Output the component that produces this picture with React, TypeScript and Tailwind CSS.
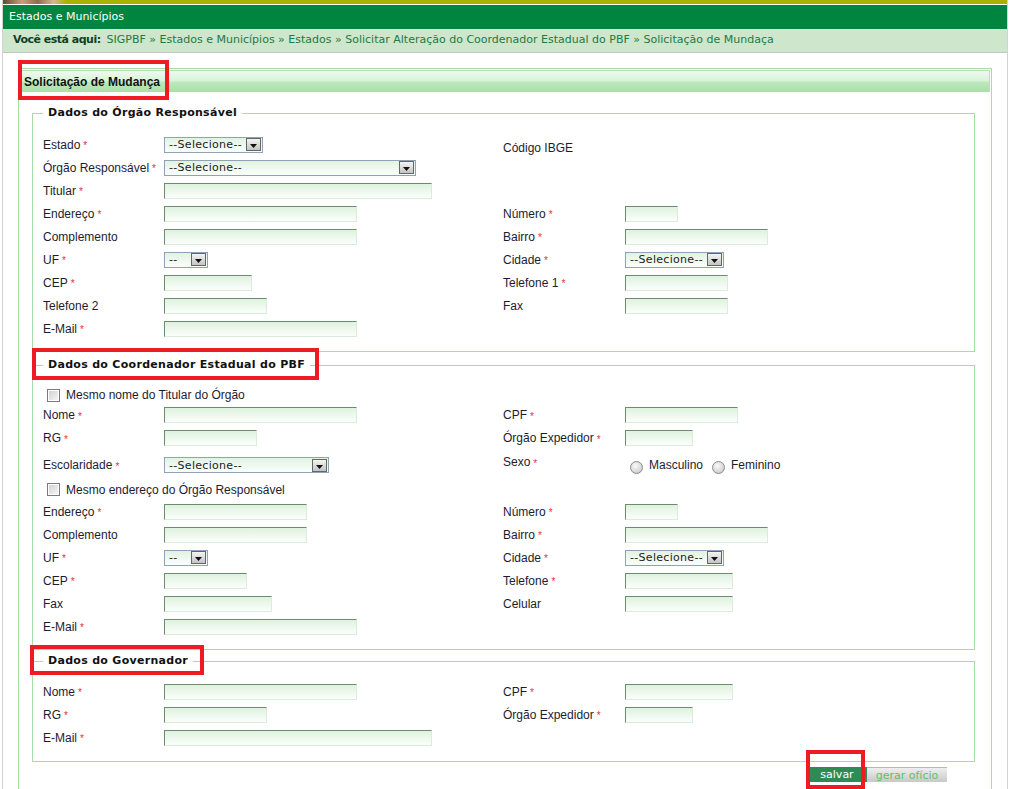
import type { ReactNode } from "react";

const arial = "font-['Liberation_Sans',Arial,sans-serif]";
const verdana = "font-['DejaVu_Sans',Verdana,sans-serif]";

function Req() {
  return <span className="ml-[3px] mt-[3px] text-[10px] leading-none text-[#e8303a]">*</span>;
}

function Label({ text, req, className = "" }: { text: string; req?: boolean; className?: string }) {
  return (
    <span className={`flex items-center whitespace-nowrap text-[12px] leading-[14px] text-[#1c1c30] ${arial} ${className}`}>
      {text}
      {req && <Req />}
    </span>
  );
}

function Input({ w }: { w: string }) {
  return (
    <div
      className={`${w} h-[16px] border border-t-[#6d8c6d] border-l-[#6d8c6d] border-r-[#dcecdc] border-b-[#dcecdc] bg-[linear-gradient(to_bottom,#dff2df,#fbfefb)]`}
    />
  );
}

function Select({ w, text = "--Selecione--" }: { w: string; text?: string }) {
  return (
    <div
      className={`${w} flex h-[16px] items-center justify-between border border-[#8ea4b6] bg-[linear-gradient(to_bottom,#e1f3e1,#fbfefb)] pl-[4px] pr-[1px]`}
    >
      <span className={`text-[11px] leading-none tracking-[0.3px] text-[#1c1c1c] ${verdana}`}>{text}</span>
      <span className="flex h-[13px] w-[15px] items-end justify-center border border-[#666] bg-[linear-gradient(to_bottom,#f4f4f4,#c4c4c4)] pb-[2px]">
        <svg width="7" height="4" viewBox="0 0 7 4">
          <path d="M0 0h7L3.5 4z" fill="#111" />
        </svg>
      </span>
    </div>
  );
}

function Checkbox({ text }: { text: string }) {
  return (
    <div className="col-span-4 flex items-center gap-[6px] pl-[4px]">
      <span className="h-[13px] w-[13px] border border-[#7b7b7b] bg-[linear-gradient(135deg,#cfcfcf,#f8f8f8)] shadow-[inset_0_0_0_1px_#fff]" />
      <Label text={text} />
    </div>
  );
}

function Radio({ text }: { text: string }) {
  return (
    <span className="flex items-center gap-[6px]">
      <span className="mt-[5px] h-[13px] w-[13px] rounded-full border border-[#8a8a8a] bg-[radial-gradient(circle_at_40%_35%,#fafafa,#c2c2c2)]" />
      <Label text={text} />
    </span>
  );
}

function Row({ h = "h-[23px]", children }: { h?: string; children: ReactNode }) {
  return <div className={`grid ${h} grid-cols-[121px_339px_122px_1fr] items-center pl-[10px]`}>{children}</div>;
}

function Fieldset({ title, className = "", children }: { title: string; className?: string; children: ReactNode }) {
  return (
    <fieldset className={`ml-[12px] w-[943px] border border-[#a6dca6] ${className}`}>
      <legend className={`ml-[10px] px-[5px] text-[11px] font-bold leading-[14px] tracking-[0.3px] text-[#111] ${verdana}`}>
        {title}
      </legend>
      {children}
    </fieldset>
  );
}

export default function App() {
  return (
    <div className="relative h-[789px] w-[1013px] overflow-hidden bg-white pl-[2px]">
      <div className="w-[1006px] border-x border-[#d3d3d3]">
        <div className="flex h-[4px]">
          <div className="w-[63px] bg-[linear-gradient(to_right,#5c4a30,#c8a07a_30%,#8c6e4e_55%,#d4b890_80%,#a6b400)]" />
          <div className="flex-1 bg-[#a6b400]" />
        </div>
        <div className="h-[1px] bg-white" />
        <div className={`flex h-[24px] items-center bg-[#008540] pl-[6px] text-[11px] text-white ${verdana}`}>
          Estados e Municípios
        </div>
        <div className={`flex h-[24px] items-center border-b border-[#c4c4c4] bg-[#cde6cc] pl-[10px] text-[11px] text-[#227a42] ${verdana}`}>
          <span className="mr-[6px] font-bold tracking-[-0.5px] text-[#123f22]">Você está aqui:</span>
          SIGPBF » Estados e Municípios » Estados » Solicitar Alteração do Coordenador Estadual do PBF » Solicitação de Mundaça
        </div>

        <div className="ml-[15px] mt-[15px] w-[974px] border border-[#a6dca6] p-[1px] pb-[40px]">
          <div className="flex h-[22px] items-center border border-b-0 border-[#b4e2b4] bg-[linear-gradient(to_bottom,#effbef_0%,#d9f3d9_45%,#bbe8bb_55%,#a8e0a8_100%)] pl-[3px]">
            <span className={`text-[12px] font-bold text-[#111] ${arial}`}>Solicitação de Mudança</span>
          </div>

          <Fieldset title="Dados do Órgão Responsável" className="mt-[14px] pb-[11px] pt-[13px]">
            <Row>
              <Label text="Estado" req />
              <Select w="w-[99px]" />
              <Label text="Código IBGE" className="mt-[6px]" />
              <span />
            </Row>
            <Row>
              <Label text="Órgão Responsável" req />
              <Select w="w-[252px]" />
            </Row>
            <Row>
              <Label text="Titular" req />
              <Input w="w-[268px]" />
            </Row>
            <Row>
              <Label text="Endereço" req />
              <Input w="w-[193px]" />
              <Label text="Número" req />
              <Input w="w-[53px]" />
            </Row>
            <Row>
              <Label text="Complemento" />
              <Input w="w-[193px]" />
              <Label text="Bairro" req />
              <Input w="w-[143px]" />
            </Row>
            <Row>
              <Label text="UF" req />
              <Select w="w-[44px]" text="--" />
              <Label text="Cidade" req />
              <Select w="w-[99px]" />
            </Row>
            <Row>
              <Label text="CEP" req />
              <Input w="w-[88px]" />
              <Label text="Telefone 1" req />
              <Input w="w-[103px]" />
            </Row>
            <Row>
              <Label text="Telefone 2" />
              <Input w="w-[103px]" />
              <Label text="Fax" />
              <Input w="w-[103px]" />
            </Row>
            <Row>
              <Label text="E-Mail" req />
              <Input w="w-[193px]" />
            </Row>
          </Fieldset>

          <Fieldset title="Dados do Coordenador Estadual do PBF" className="mt-[6px] pb-[11px] pt-[13px]">
            <Row h="h-[20px]">
              <Checkbox text="Mesmo nome do Titular do Órgão" />
            </Row>
            <Row h="h-[20px]">
              <Label text="Nome" req />
              <Input w="w-[193px]" />
              <Label text="CPF" req />
              <Input w="w-[113px]" />
            </Row>
            <Row h="h-[26px]">
              <Label text="RG" req />
              <Input w="w-[93px]" />
              <Label text="Órgão Expedidor" req />
              <Input w="w-[68px]" />
            </Row>
            <Row h="h-[28px]">
              <Label text="Escolaridade" req />
              <Select w="w-[165px]" />
              <Label text="Sexo" req className="mb-[6px]" />
              <div className="flex items-center gap-[9px] pl-[5px]">
                <Radio text="Masculino" />
                <Radio text="Feminino" />
              </div>
            </Row>
            <Row h="h-[21px]">
              <Checkbox text="Mesmo endereço do Órgão Responsável" />
            </Row>
            <Row>
              <Label text="Endereço" req />
              <Input w="w-[143px]" />
              <Label text="Número" req />
              <Input w="w-[53px]" />
            </Row>
            <Row>
              <Label text="Complemento" />
              <Input w="w-[143px]" />
              <Label text="Bairro" req />
              <Input w="w-[143px]" />
            </Row>
            <Row>
              <Label text="UF" req />
              <Select w="w-[44px]" text="--" />
              <Label text="Cidade" req />
              <Select w="w-[99px]" />
            </Row>
            <Row>
              <Label text="CEP" req />
              <Input w="w-[83px]" />
              <Label text="Telefone" req />
              <Input w="w-[108px]" />
            </Row>
            <Row>
              <Label text="Fax" />
              <Input w="w-[108px]" />
              <Label text="Celular" />
              <Input w="w-[108px]" />
            </Row>
            <Row>
              <Label text="E-Mail" req />
              <Input w="w-[193px]" />
            </Row>
          </Fieldset>

          <Fieldset title="Dados do Governador" className="mt-[4px] pb-[12px] pt-[12px]">
            <Row>
              <Label text="Nome" req />
              <Input w="w-[193px]" />
              <Label text="CPF" req />
              <Input w="w-[108px]" />
            </Row>
            <Row>
              <Label text="RG" req />
              <Input w="w-[103px]" />
              <Label text="Órgão Expedidor" req />
              <Input w="w-[68px]" />
            </Row>
            <Row>
              <Label text="E-Mail" req />
              <Input w="w-[268px]" />
            </Row>
          </Fieldset>

          <div className={`mt-[5px] flex justify-end pr-[43px] text-[11px] leading-none ${verdana}`}>
            <button className="flex h-[15px] w-[60px] items-center justify-center bg-[#2f8a58] text-white">salvar</button>
            <button className="flex h-[15px] w-[80px] items-center justify-center border-t border-[#b8b8b8] bg-[linear-gradient(to_bottom,#efefef,#c8c8c8)] text-[#5fc25f]">
              gerar ofício
            </button>
          </div>
        </div>
      </div>

      <div className="absolute left-[18px] top-[60px] h-[40px] w-[151px] border-[4px] border-[#ed1c24]" />
      <div className="absolute left-[32px] top-[348px] h-[32px] w-[287px] border-[4px] border-[#ed1c24]" />
      <div className="absolute left-[30px] top-[645px] h-[30px] w-[174px] border-[4px] border-[#ed1c24]" />
      <div className="absolute left-[806px] top-[750px] h-[39px] w-[59px] border-[4px] border-[#ed1c24]" />
    </div>
  );
}
